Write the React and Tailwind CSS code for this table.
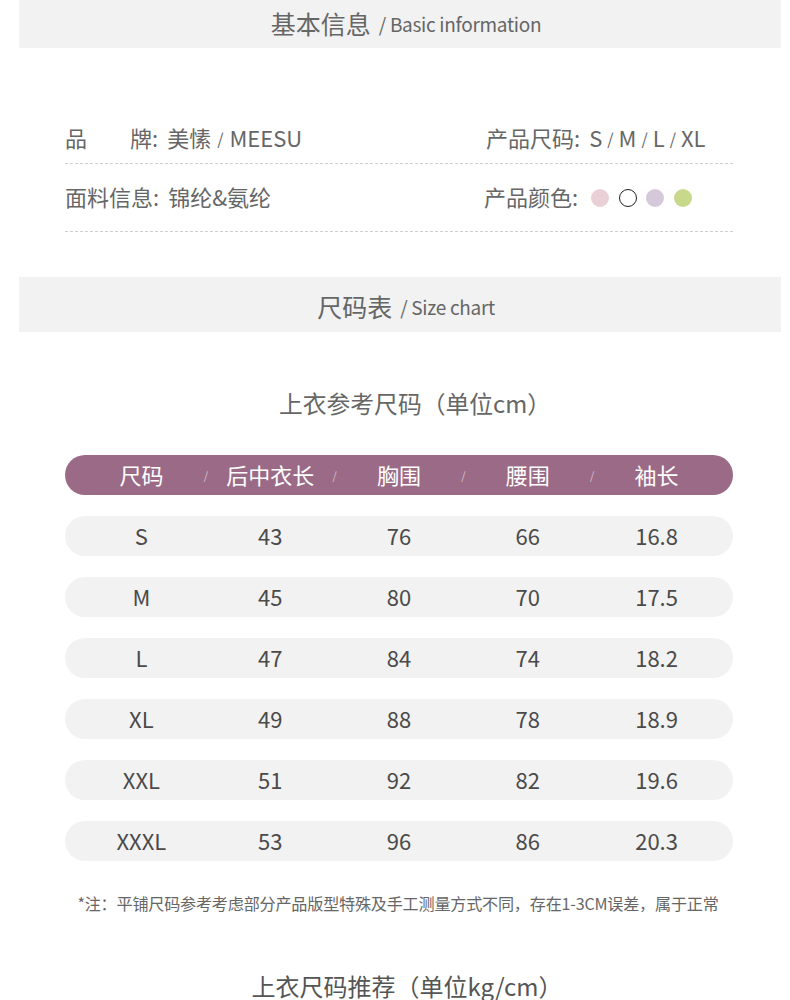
import React from "react";

const FONT = { fontFamily: '"Noto Sans CJK SC", "Noto Sans", sans-serif' };

const headers = ["尺码", "后中衣长", "胸围", "腰围", "袖长"];
const rows = [
  ["S", "43", "76", "66", "16.8"],
  ["M", "45", "80", "70", "17.5"],
  ["L", "47", "84", "74", "18.2"],
  ["XL", "49", "88", "78", "18.9"],
  ["XXL", "51", "92", "82", "19.6"],
  ["XXXL", "53", "96", "86", "20.3"],
];

export default function App() {
  return (
    <div className="w-[790px] bg-white overflow-hidden" style={FONT}>
      {/* Basic information */}
      <div className="ml-[19px] w-[762px] h-[48px] bg-[#f2f2f2] flex items-center justify-center text-[#666] pb-[2px] pl-[12px]">
        <span className="text-[25px] leading-none">基本信息</span>
        <span className="text-[19px] leading-none ml-[8px] tracking-[-0.3px]">/ Basic information</span>
      </div>

      <div className="ml-[65px] w-[668px] mt-[64px] text-[#666] text-[22px]">
        <div className="h-[52px] flex items-center border-b border-dashed border-[#cfcfcf]">
          <div className="w-[421px] flex items-center">
            <span>品</span>
            <span className="ml-[43px]">牌:</span>
            <span className="ml-[9px]">美愫</span>
            <span className="text-[16px] mx-[6px]">/</span>
            <span>MEESU</span>
          </div>
          <div className="flex items-center">
            <span>产品尺码:</span>
            <span className="ml-[9px]">S</span>
            <span className="text-[16px] mx-[5px]">/</span>
            <span>M</span>
            <span className="text-[16px] mx-[5px]">/</span>
            <span>L</span>
            <span className="text-[16px] mx-[5px]">/</span>
            <span>XL</span>
          </div>
        </div>
        <div className="h-[68px] flex items-center border-b border-dashed border-[#cfcfcf] pb-[2px]">
          <div className="w-[419px] flex items-center">
            <span>面料信息:</span>
            <span className="ml-[9px]">锦纶&amp;氨纶</span>
          </div>
          <div className="flex items-center">
            <span>产品颜色:</span>
            <div className="flex items-center gap-[9.5px] ml-[13px] mt-[2px]">
              <span className="w-[18px] h-[18px] rounded-full bg-[#e8d0d6]" />
              <span className="w-[18px] h-[18px] rounded-full border-[1.5px] border-[#222] bg-white" />
              <span className="w-[18px] h-[18px] rounded-full bg-[#d6c8db]" />
              <span className="w-[18px] h-[18px] rounded-full bg-[#c8d98c]" />
            </div>
          </div>
        </div>
      </div>

      {/* Size chart */}
      <div className="mt-[45px] ml-[19px] w-[762px] h-[55px] bg-[#f2f2f2] flex items-center justify-center text-[#666] pt-[4px] pl-[12px]">
        <span className="text-[25px] leading-none">尺码表</span>
        <span className="text-[19px] leading-none ml-[8px] tracking-[-0.3px]">/ Size chart</span>
      </div>

      <div className="mt-[55px] text-center text-[#666] text-[23.8px] leading-[32px] pl-[40px]">
        上衣参考尺码（单位cm）
      </div>

      <div className="ml-[65px] w-[668px] mt-[36px]">
        <div className="h-[40px] rounded-full bg-[#9b6a86] flex items-center px-[12px] text-white text-[22px] pb-[3px]">
          {headers.map((h, i) => (
            <React.Fragment key={h}>
              {i > 0 && (
                <div className="w-0 flex justify-center pt-[3px]">
                  <span className="text-[11px] text-[#d9c2cf] leading-none">/</span>
                </div>
              )}
              <div className="flex-1 text-center leading-none">{h}</div>
            </React.Fragment>
          ))}
        </div>

        <div className="mt-[21px] flex flex-col gap-[21px]">
          {rows.map((r) => (
            <div
              key={r[0]}
              className="h-[40px] rounded-full bg-[#f2f2f2] flex items-center px-[12px] text-[#4a4a4a] text-[22px] pb-[3px]"
            >
              {r.map((c, i) => (
                <div key={i} className="flex-1 text-center leading-none">
                  {c}
                </div>
              ))}
            </div>
          ))}
        </div>
      </div>

      <div className="mt-[30px] text-center text-[#666] text-[16.1px] leading-[24px] tracking-[-0.2px] pl-[6px]">
        *注：平铺尺码参考考虑部分产品版型特殊及手工测量方式不同，存在1-3CM误差，属于正常
      </div>

      <div className="mt-[54px] text-center text-[#555] text-[24px] leading-[34px] pb-[40px] pl-[24px]">
        上衣尺码推荐（单位kg/cm）
      </div>
    </div>
  );
}
